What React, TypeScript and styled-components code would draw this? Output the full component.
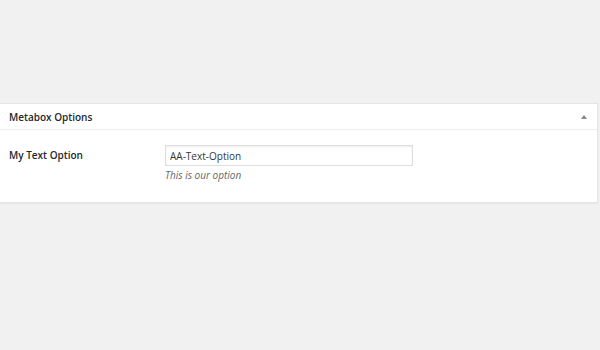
import React from 'react';
import styled, { createGlobalStyle } from 'styled-components';

const GlobalStyle = createGlobalStyle`
  html, body {
    margin: 0;
    padding: 0;
    background: #f1f1f1;
    font-family: 'Open Sans', 'Liberation Sans', sans-serif;
  }
`;

const Page = styled.div`
  width: 600px;
  height: 350px;
  padding-top: 103px;
  box-sizing: border-box;
`;

const Postbox = styled.div`
  width: 598px;
  background: #fff;
  border: 1px solid #e5e5e5;
  border-left: none;
  box-shadow: 0 1px 1px rgba(0, 0, 0, 0.04);
  box-sizing: border-box;
`;

const Header = styled.div`
  height: 26px;
  display: flex;
  align-items: center;
  justify-content: space-between;
  padding: 0 10px 0 9px;
  border-bottom: 1px solid #eeeeee;
  box-sizing: border-box;
`;

const Title = styled.h3`
  margin: 0;
  font-size: 10px;
  font-weight: 600;
  color: #23282d;
`;

const Toggle = styled.span`
  width: 0;
  height: 0;
  border-left: 3px solid transparent;
  border-right: 3px solid transparent;
  border-bottom: 4px solid #888;
`;

const Inside = styled.div`
  padding: 15px 0 19px 9px;
`;

const Row = styled.div`
  display: grid;
  grid-template-columns: 156px 248px;
  align-items: start;
`;

const Label = styled.label`
  font-size: 10px;
  font-weight: 600;
  color: #23282d;
  line-height: 21px;
`;

const Field = styled.div`
  display: flex;
  flex-direction: column;
`;

const TextInput = styled.input`
  height: 21px;
  width: 248px;
  box-sizing: border-box;
  border: 1px solid #ddd;
  box-shadow: inset 0 1px 2px rgba(0, 0, 0, 0.07);
  padding: 0 4px;
  font-family: inherit;
  font-size: 10px;
  color: #32373c;
  outline: none;
`;

const Description = styled.p`
  margin: 1px 0 0;
  font-size: 10px;
  font-style: italic;
  color: #666;
  line-height: 16px;
`;

export default function App() {
  return (
    <Page>
      <GlobalStyle />
      <Postbox>
        <Header>
          <Title>Metabox Options</Title>
          <Toggle />
        </Header>
        <Inside>
          <Row>
            <Label>My Text Option</Label>
            <Field>
              <TextInput type="text" defaultValue="AA-Text-Option" />
              <Description>This is our option</Description>
            </Field>
          </Row>
        </Inside>
      </Postbox>
    </Page>
  );
}
